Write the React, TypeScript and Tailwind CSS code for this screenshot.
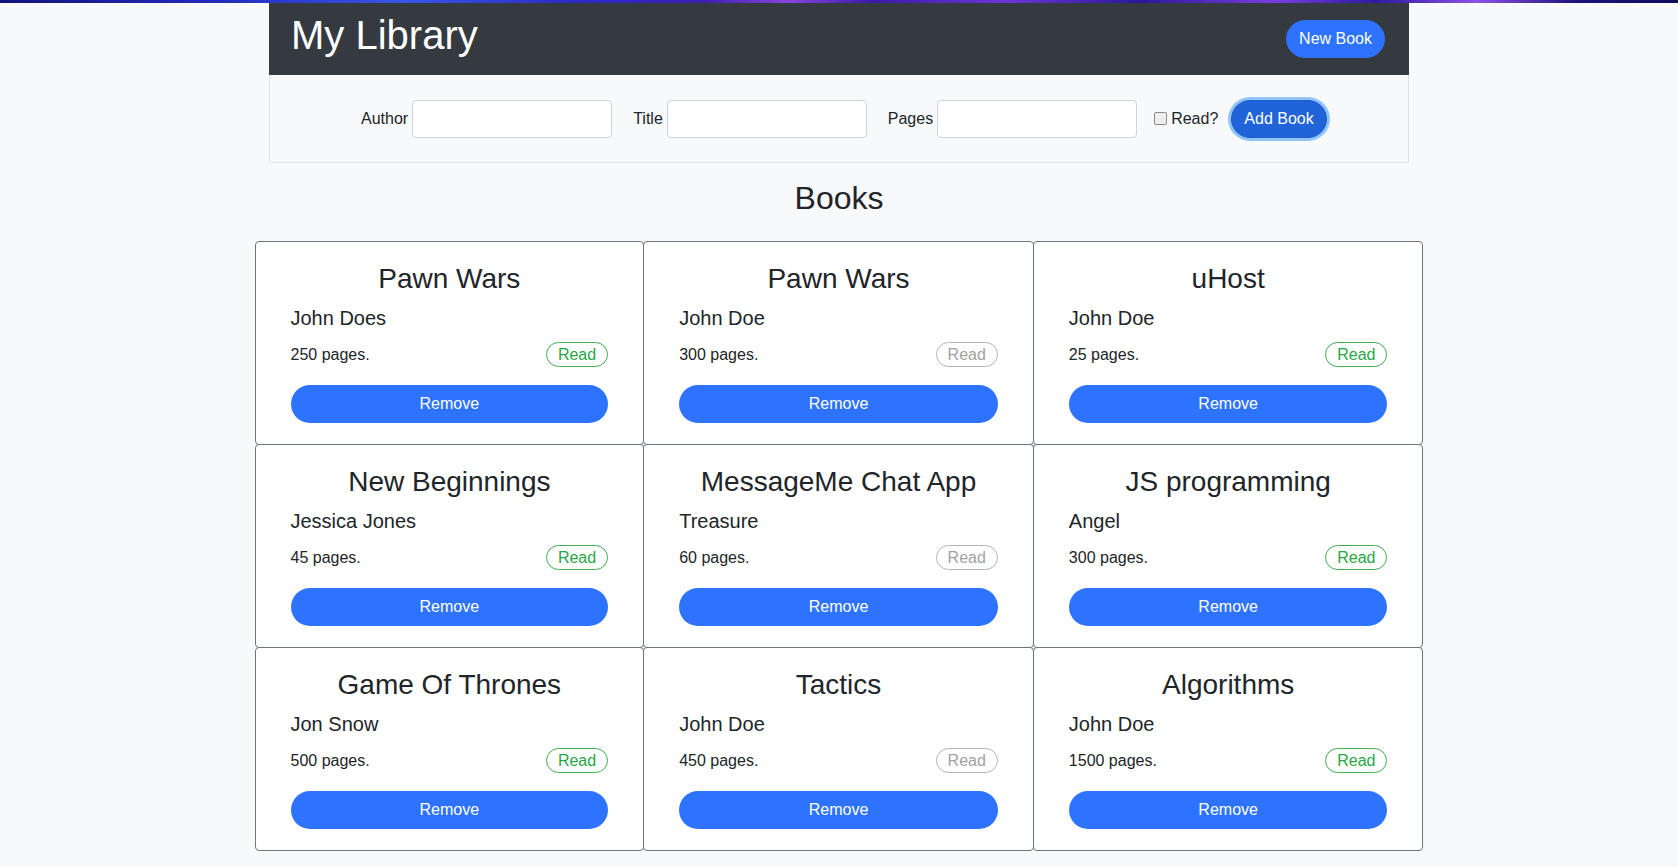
import React from "react";

type Book = { title: string; author: string; pages: number; read: boolean };

const books: Book[] = [
  { title: "Pawn Wars", author: "John Does", pages: 250, read: true },
  { title: "Pawn Wars", author: "John Doe", pages: 300, read: false },
  { title: "uHost", author: "John Doe", pages: 25, read: true },
  { title: "New Beginnings", author: "Jessica Jones", pages: 45, read: true },
  { title: "MessageMe Chat App", author: "Treasure", pages: 60, read: false },
  { title: "JS programming", author: "Angel", pages: 300, read: true },
  { title: "Game Of Thrones", author: "Jon Snow", pages: 500, read: true },
  { title: "Tactics", author: "John Doe", pages: 450, read: false },
  { title: "Algorithms", author: "John Doe", pages: 1500, read: true },
];

function Card({ book, index }: { book: Book; index: number }) {
  const col = index % 3;
  const row = Math.floor(index / 3);
  return (
    <div
      className={`bg-white border border-[#6c757d] rounded-[4px] px-[35px] pt-[20px] pb-[21px] ${
        col > 0 ? "-ml-px" : ""
      } ${row > 0 ? "-mt-px" : ""}`}
    >
      <h3 className="text-[28px] leading-[34px] text-center mb-[10px]">{book.title}</h3>
      <h5 className="text-[20px] leading-[24px] mb-[12px]">{book.author}</h5>
      <div className="flex items-center justify-between h-[25px] mb-[18px]">
        <span className="text-base leading-6">{book.pages} pages.</span>
        {book.read ? (
          <span className="h-[25px] px-[11px] flex items-center rounded-full border border-[#3fae55] text-[#28a745] text-base leading-none">
            Read
          </span>
        ) : (
          <span className="h-[25px] px-[11px] flex items-center rounded-full border border-[#b4b4b4] text-[#a2a2a2] text-base leading-none">
            Read
          </span>
        )}
      </div>
      <button className="w-full h-[38px] rounded-full bg-[#2d73ff] text-white text-base leading-6">
        Remove
      </button>
    </div>
  );
}

export default function App() {
  return (
    <div className="min-h-screen bg-[#f8f9fa] text-[#212529] font-['Liberation_Sans',Arial,sans-serif]">
      <div className="h-[3px] bg-[linear-gradient(90deg,#15137a_0%,#2228b8_12%,#3a55e8_24%,#2a2bc4_34%,#3c1fb2_42%,#8a45dc_47%,#3a1aa8_52%,#6c35d6_60%,#2a1898_68%,#7a3de0_76%,#2b1aa0_82%,#8d52e6_88%,#1c127a_94%,#120c5c_100%)]" />
      <div className="w-[1140px] mx-auto">
        <div className="h-[72px] bg-[#343a40] flex items-center justify-between pl-[22px] pr-[24px]">
          <h1 className="text-[40px] leading-[48px] text-white font-normal mb-2">My Library</h1>
          <button className="h-[38px] px-3 rounded-full border border-[#2d73ff] bg-[#2d73ff] text-white text-base leading-6">
            New Book
          </button>
        </div>
        <div className="h-[88px] border border-t-0 border-[#dee2e6] bg-[#f8f9fa] flex items-center pl-[91px] text-base">
          <label className="mr-1">Author</label>
          <input className="w-[200px] h-[38px] bg-white border border-[#ced4da] rounded-[4px]" />
          <label className="ml-[21px] mr-1">Title</label>
          <input className="w-[200px] h-[38px] bg-white border border-[#ced4da] rounded-[4px]" />
          <label className="ml-[21px] mr-1">Pages</label>
          <input className="w-[200px] h-[38px] bg-white border border-[#ced4da] rounded-[4px]" />
          <span className="ml-[17px] w-[13px] h-[13px] rounded-[2px] border border-[#8a8a8a] bg-[#eeeeee]" />
          <span className="ml-[4px]">Read?</span>
          <button className="ml-[13px] h-[38px] px-3 rounded-full border border-[#1d5cc9] bg-[#2163d8] text-white text-base leading-6 shadow-[0_0_0_3px_rgba(38,143,255,0.5)]">
            Add Book
          </button>
        </div>
      </div>
      <h2 className="text-[32px] leading-[38px] text-center mt-[16px] mb-[24px]">Books</h2>
      <div className="w-[1169px] mx-auto grid grid-cols-3">
        {books.map((b, i) => (
          <Card key={i} book={b} index={i} />
        ))}
      </div>
    </div>
  );
}
